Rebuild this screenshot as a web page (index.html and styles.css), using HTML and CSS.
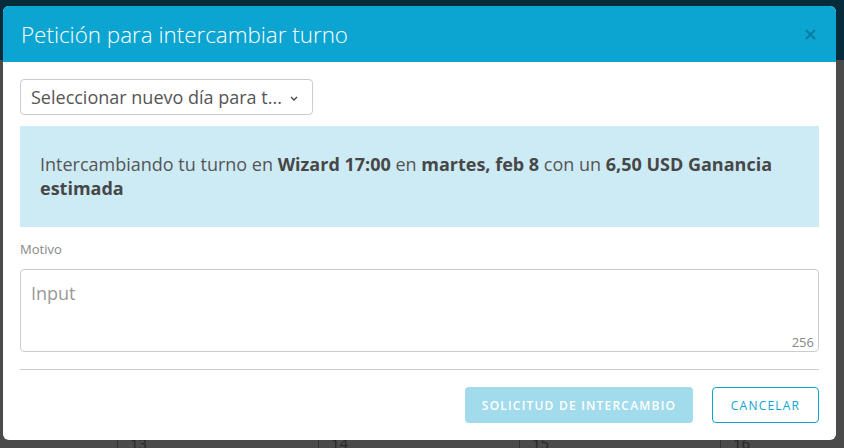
FILE: index.html
```html
<!DOCTYPE html>
<html lang="es">
<head>
    <meta charset="UTF-8">
    <meta name="viewport" content="width=device-width, initial-scale=1.0">
    <title>Petición para intercambiar turno</title>
    <link rel="stylesheet" href="styles.css">
</head>
<body>
    <div class="page">
        <div class="topbar"></div>
        <div class="week">
            <div class="day"></div>
            <div class="day">13</div>
            <div class="day">14</div>
            <div class="day">15</div>
            <div class="day">16</div>
        </div>
    </div>

    <div class="modal">
        <div class="modal-header">
            <h1 class="modal-title">Petición para intercambiar turno</h1>
            <button class="close-btn" aria-label="Cerrar">
                <svg width="11" height="11" viewBox="0 0 11 11">
                    <path d="M1 1L10 10M10 1L1 10" stroke="currentColor" stroke-width="1.8" fill="none"/>
                </svg>
            </button>
        </div>

        <div class="modal-body">
            <button class="select">
                <span>Seleccionar nuevo día para t...</span>
                <svg width="8" height="5" viewBox="0 0 8 5">
                    <path d="M1 1L4 4L7 1" stroke="currentColor" stroke-width="1.3" fill="none"/>
                </svg>
            </button>

            <div class="info">
                Intercambiando tu turno en <b>Wizard 17:00</b> en <b>martes, feb 8</b> con un <b>6,50 USD Ganancia estimada</b>
            </div>

            <label class="field-label">Motivo</label>
            <div class="textarea">
                <span class="placeholder">Input</span>
                <span class="counter">256</span>
            </div>
        </div>

        <div class="modal-footer">
            <button class="btn btn-primary">SOLICITUD DE INTERCAMBIO</button>
            <button class="btn btn-outline">CANCELAR</button>
        </div>
    </div>
</body>
</html>
```

FILE: styles.css
```css
body {
    margin: 0;
    height: 448px;
    overflow: hidden;
    background: #4a4a4a;
    font-family: 'Open Sans', sans-serif;
}

.page {
    display: flex;
    flex-direction: column;
    height: 448px;
}

.topbar {
    height: 60px;
    background: #062b3b;
}

.week {
    margin-top: auto;
    display: grid;
    grid-template-columns: 117px repeat(4, 201px);
    height: 16px;
}

.day {
    border-left: 1px solid #333;
    padding-left: 12px;
    font-size: 15px;
    line-height: 22px;
    color: #262626;
}

.day:first-child {
    border-left: none;
}

.modal {
    position: fixed;
    top: 6px;
    left: 3px;
    width: 833px;
    height: 434px;
    background: #fff;
    border-radius: 6px;
    overflow: hidden;
    display: flex;
    flex-direction: column;
}

.modal-header {
    height: 56px;
    background: #0ca5d1;
    display: flex;
    align-items: center;
    justify-content: space-between;
    padding: 0 20px 0 18px;
}

.modal-title {
    margin: 0;
    font-size: 22.4px;
    font-weight: 300;
    color: #fff;
}

.close-btn {
    border: none;
    background: none;
    padding: 0;
    color: #0a7aa0;
    display: flex;
    cursor: pointer;
}

.modal-body {
    padding: 17px 17px 0 17px;
    display: flex;
    flex-direction: column;
}

.select {
    align-self: flex-start;
    width: 293px;
    height: 36px;
    border: 1px solid #ccc;
    border-radius: 4px;
    background: #fff;
    display: flex;
    align-items: center;
    gap: 8px;
    padding: 0 10px;
    font-family: inherit;
    font-size: 18px;
    color: #555;
    white-space: nowrap;
    cursor: pointer;
}

.select svg {
    color: #444;
    margin-top: 2px;
}

.info {
    margin-top: 11px;
    background: #cdebf5;
    padding: 26px 20px 27px 20px;
    font-size: 18px;
    line-height: 24px;
    color: #555;
}

.info b {
    color: #474747;
    font-weight: 700;
}

.field-label {
    margin-top: 13px;
    font-size: 13px;
    color: #888;
    line-height: 18px;
}

.textarea {
    margin-top: 11px;
    height: 83px;
    border: 1px solid #ccc;
    border-radius: 4px;
    display: flex;
    flex-direction: column;
    justify-content: space-between;
    padding: 11px 4px 1px 10px;
    box-sizing: border-box;
}

.placeholder {
    font-size: 18px;
    color: #999;
    line-height: 24px;
}

.counter {
    align-self: flex-end;
    font-size: 13px;
    color: #888;
    line-height: 16px;
}

.modal-footer {
    margin: 17px 17px 0 17px;
    border-top: 1px solid #ccc;
    padding-top: 17px;
    display: flex;
    justify-content: flex-end;
    gap: 19px;
}

.btn {
    height: 36px;
    border-radius: 4px;
    font-family: inherit;
    font-size: 12px;
    letter-spacing: 1.2px;
    white-space: nowrap;
    cursor: pointer;
}

.btn-primary {
    width: 228px;
    border: none;
    background: #a2dbec;
    color: #fff;
    font-weight: 600;
}

.btn-outline {
    width: 107px;
    border: 1px solid #0ca5d1;
    background: #fff;
    color: #0ca5d1;
}
```
